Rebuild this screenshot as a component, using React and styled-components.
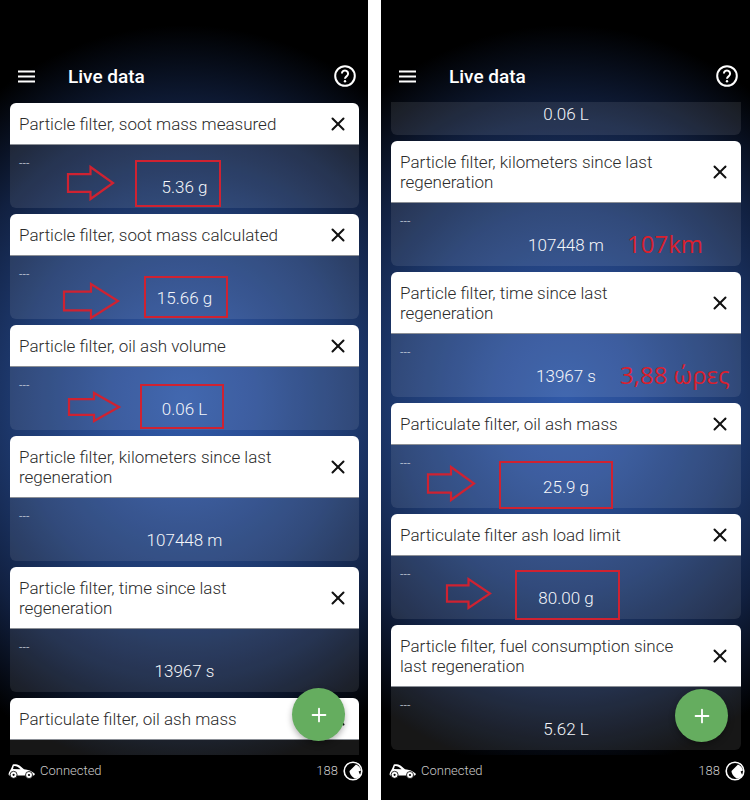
import styled, { createGlobalStyle } from 'styled-components';
import { X, Plus } from 'lucide-react';

const GlobalStyle = createGlobalStyle`
  html, body {
    margin: 0;
    padding: 0;
    background: #fff;
  }
  body {
    font-family: Roboto, "Liberation Sans", sans-serif;
  }
`;

const Page = styled.div`
  display: flex;
  justify-content: space-between;
  width: 750px;
  height: 800px;
  overflow: hidden;
`;

const Phone = styled.div`
  position: relative;
  display: flex;
  flex-direction: column;
  width: ${(props) => props.$width}px;
  height: 800px;
  background:
    radial-gradient(ellipse 330px 375px at 50% 50%, #3059a8 0%, #2a4e96 22%, #1e3a70 50%, #112040 75%, #000 100%);
`;

const Header = styled.header`
  flex: none;
  display: flex;
  align-items: center;
  height: 52px;
  margin-top: 50px;
  padding: 0 12px 0 18px;
  color: #fff;
`;

const Title = styled.h1`
  flex: 1;
  margin: 2px 0 0 33px;
  font-size: 19px;
  font-weight: 500;
  line-height: 50px;
`;

const List = styled.div`
  flex: 1;
  min-height: 0;
  display: flex;
  flex-direction: column;
  gap: 6px;
  padding: ${(props) => props.$top}px 9px 0 10px;
  overflow: hidden;
`;

const Card = styled.section`
  flex: none;
`;

const CardHead = styled.div`
  display: flex;
  align-items: center;
  justify-content: space-between;
  min-height: 41px;
  padding: 0 10px 0 9px;
  box-sizing: content-box;
  background: #fff;
  border-radius: 6px 6px 0 0;
  border-bottom: 1px solid #8b8f96;
  color: #2b2b2b;
`;

const CardTitle = styled.div`
  font-size: 17px;
  font-weight: 300;
  line-height: 20px;
  padding: 11px 0 10px;
  width: 290px;
`;

const CloseIcon = styled(X)`
  flex: none;
  color: #111;
`;

const Panel = styled.div`
  position: relative;
  height: 63px;
  background: rgba(255, 255, 255, 0.09);
  border-radius: 0 0 6px 6px;
`;

const PartialPanel = styled(Panel)`
  height: 33px;
`;

const Dashes = styled.div`
  position: absolute;
  left: 9px;
  top: 12px;
  font-size: 12px;
  line-height: 14px;
  font-weight: 300;
  color: #d5d9e2;
`;

const Value = styled.div`
  position: absolute;
  left: 0;
  right: 0;
  bottom: 11px;
  text-align: center;
  font-size: 17px;
  line-height: 20px;
  font-weight: 300;
  color: #f4f6fa;
`;

const RedBox = styled.div`
  position: absolute;
  left: ${(props) => props.$x}px;
  top: ${(props) => props.$y}px;
  width: ${(props) => props.$w}px;
  height: ${(props) => props.$h}px;
  box-sizing: border-box;
  border: 2.5px solid #cf2231;
`;

const ArrowWrap = styled.svg`
  position: absolute;
  left: ${(props) => props.$x}px;
  top: ${(props) => props.$y}px;
  overflow: visible;
`;

const RedNote = styled.div`
  position: absolute;
  left: ${(props) => props.$x}px;
  top: 25px;
  font-family: "Open Sans", sans-serif;
  font-size: 24px;
  line-height: 32px;
  white-space: nowrap;
  color: #d9202e;
`;

const Footer = styled.footer`
  flex: none;
  display: flex;
  align-items: flex-start;
  justify-content: space-between;
  height: 45px;
  padding: 7px 5px 0 8px;
  box-sizing: border-box;
  background: #000;
  color: #c9c9c9;
  font-size: 13px;
  font-weight: 300;
`;

const FooterSide = styled.div`
  display: flex;
  align-items: center;
  gap: ${(props) => props.$gap}px;
  height: 18px;
  line-height: 18px;
`;

const Fab = styled.div`
  position: absolute;
  right: ${(props) => props.$right}px;
  top: ${(props) => props.$top}px;
  display: flex;
  align-items: center;
  justify-content: center;
  width: 53px;
  height: 53px;
  border-radius: 50%;
  background: #65ad5f;
  color: #fff;
  box-shadow: 0 3px 6px rgba(0, 0, 0, 0.3);
`;

function MenuIcon() {
  return (
    <svg width="17" height="13" viewBox="0 0 17 13" fill="none" stroke="#fff" strokeWidth="2">
      <path d="M0 1.5h17M0 6.5h17M0 11.5h17" />
    </svg>
  );
}

function HelpIcon() {
  return (
    <svg width="22" height="22" viewBox="0 0 22 22" fill="none" stroke="#fff">
      <circle cx="11" cy="11" r="9.8" strokeWidth="2" />
      <path d="M7.9 8.6a3.1 3.1 0 1 1 4.9 2.5c-1.1.8-1.8 1.3-1.8 2.6" strokeWidth="2" />
      <circle cx="11" cy="16.2" r="1.2" fill="#fff" stroke="none" />
    </svg>
  );
}

function CarIcon() {
  return (
    <svg width="27" height="15" viewBox="0 0 27 15">
      <path
        d="M.6 10C.9 7.6 2.6 6.2 3.4 4L4.8.4C7.6 0 9.8.6 11.5 1.6L16 5.2C20 5.6 24 6.8 26.8 9.8 27 10.8 26.2 11.6 25 11.6H1.6C.8 11.4.5 10.8.6 10Z"
        fill="#fff"
      />
      <path d="M5.8 2 5 4.9 12.6 5.2 9.8 3C8.6 2.3 7.2 1.9 5.8 2Z" fill="#000" />
      <circle cx="5.6" cy="10.8" r="3.5" fill="#fff" stroke="#000" strokeWidth=".8" />
      <circle cx="5.6" cy="10.8" r="1.1" fill="#000" />
      <circle cx="21" cy="11" r="3.5" fill="#fff" stroke="#000" strokeWidth=".8" />
      <circle cx="21" cy="11" r="1.1" fill="#000" />
    </svg>
  );
}

function GaugeIcon() {
  return (
    <svg width="20" height="20" viewBox="0 0 20 20">
      <circle cx="10" cy="10" r="8.8" fill="none" stroke="#fff" strokeWidth="1.6" />
      <path d="M6.5 10 13 3.6C15.5 4.6 17.6 6.8 18 9.5L15.6 10.6 17.4 14.6C15.8 16.6 13.8 17.6 12 17.6 9.5 16.4 6.5 13 6.5 10Z" fill="#fff" />
    </svg>
  );
}

function RedArrow({ x, y, w, h }) {
  // outline arrow pointing right, scaled by w and h
  const neck = w * 0.5;
  const barTop = h * 0.24;
  const barBottom = h * 0.76;
  return (
    <ArrowWrap $x={x} $y={y} width={w} height={h} viewBox={`0 0 ${w} ${h}`} fill="none" stroke="#cf2231" strokeWidth="2.2">
      <path
        d={`M1 ${barTop}H${neck}V1L${w - 1} ${h / 2}L${neck} ${h - 1}V${barBottom}H1Z`}
      />
    </ArrowWrap>
  );
}

function DataCard({ title, value, children }) {
  return (
    <Card>
      <CardHead>
        <CardTitle>{title}</CardTitle>
        <CloseIcon size={22} strokeWidth={2.2} />
      </CardHead>
      <Panel>
        {/* the last left card is scrolled off, its panel shows nothing */}
        {value && <Dashes>---</Dashes>}
        {value && <Value>{value}</Value>}
        {children}
      </Panel>
    </Card>
  );
}

function Bar({ count }) {
  return (
    <Footer>
      <FooterSide $gap={5}>
        <CarIcon />
        <span>Connected</span>
      </FooterSide>
      <FooterSide $gap={5}>
        <span>{count}</span>
        <GaugeIcon />
      </FooterSide>
    </Footer>
  );
}

function Top() {
  return (
    <Header>
      <MenuIcon />
      <Title>Live data</Title>
      <HelpIcon />
    </Header>
  );
}

export default function App() {
  return (
    <Page>
      <GlobalStyle />
      <Phone $width={368}>
        <Top />
        <List $top={1}>
          <DataCard title="Particle filter, soot mass measured" value="5.36 g">
            <RedBox $x={125} $y={15} $w={86} $h={47} />
            <RedArrow x={57} y={21} w={47} h={34} />
          </DataCard>
          <DataCard title="Particle filter, soot mass calculated" value="15.66 g">
            <RedBox $x={134} $y={20} $w={84} $h={42} />
            <RedArrow x={53} y={27} w={56} h={36} />
          </DataCard>
          <DataCard title="Particle filter, oil ash volume" value="0.06 L">
            <RedBox $x={130} $y={17} $w={84} $h={45} />
            <RedArrow x={58} y={25} w={52} h={30} />
          </DataCard>
          <DataCard title="Particle filter, kilometers since last regeneration" value="107448 m" />
          <DataCard title="Particle filter, time since last regeneration" value="13967 s" />
          <DataCard title="Particulate filter, oil ash mass" />
        </List>
        <Bar count={188} />
        <Fab $right={23} $top={688}>
          <Plus size={22} strokeWidth={2} />
        </Fab>
      </Phone>
      <Phone $width={369}>
        <Top />
        <List $top={0}>
          <Card>
            <PartialPanel>
              <Value>0.06 L</Value>
            </PartialPanel>
          </Card>
          <DataCard title="Particle filter, kilometers since last regeneration" value="107448 m">
            <RedNote $x={236}>107km</RedNote>
          </DataCard>
          <DataCard title="Particle filter, time since last regeneration" value="13967 s">
            <RedNote $x={229}>3,88 ώρες</RedNote>
          </DataCard>
          <DataCard title="Particulate filter, oil ash mass" value="25.9 g">
            <RedBox $x={108} $y={16} $w={114} $h={48} />
            <RedArrow x={36} y={21} w={48} h={35} />
          </DataCard>
          <DataCard title="Particulate filter ash load limit" value="80.00 g">
            <RedBox $x={124} $y={14} $w={105} $h={50} />
            <RedArrow x={55} y={22} w={45} h={31} />
          </DataCard>
          <DataCard title="Particle filter, fuel consumption since last regeneration" value="5.62 L" />
        </List>
        <Bar count={188} />
        <Fab $right={22} $top={689}>
          <Plus size={22} strokeWidth={2} />
        </Fab>
      </Phone>
    </Page>
  );
}
